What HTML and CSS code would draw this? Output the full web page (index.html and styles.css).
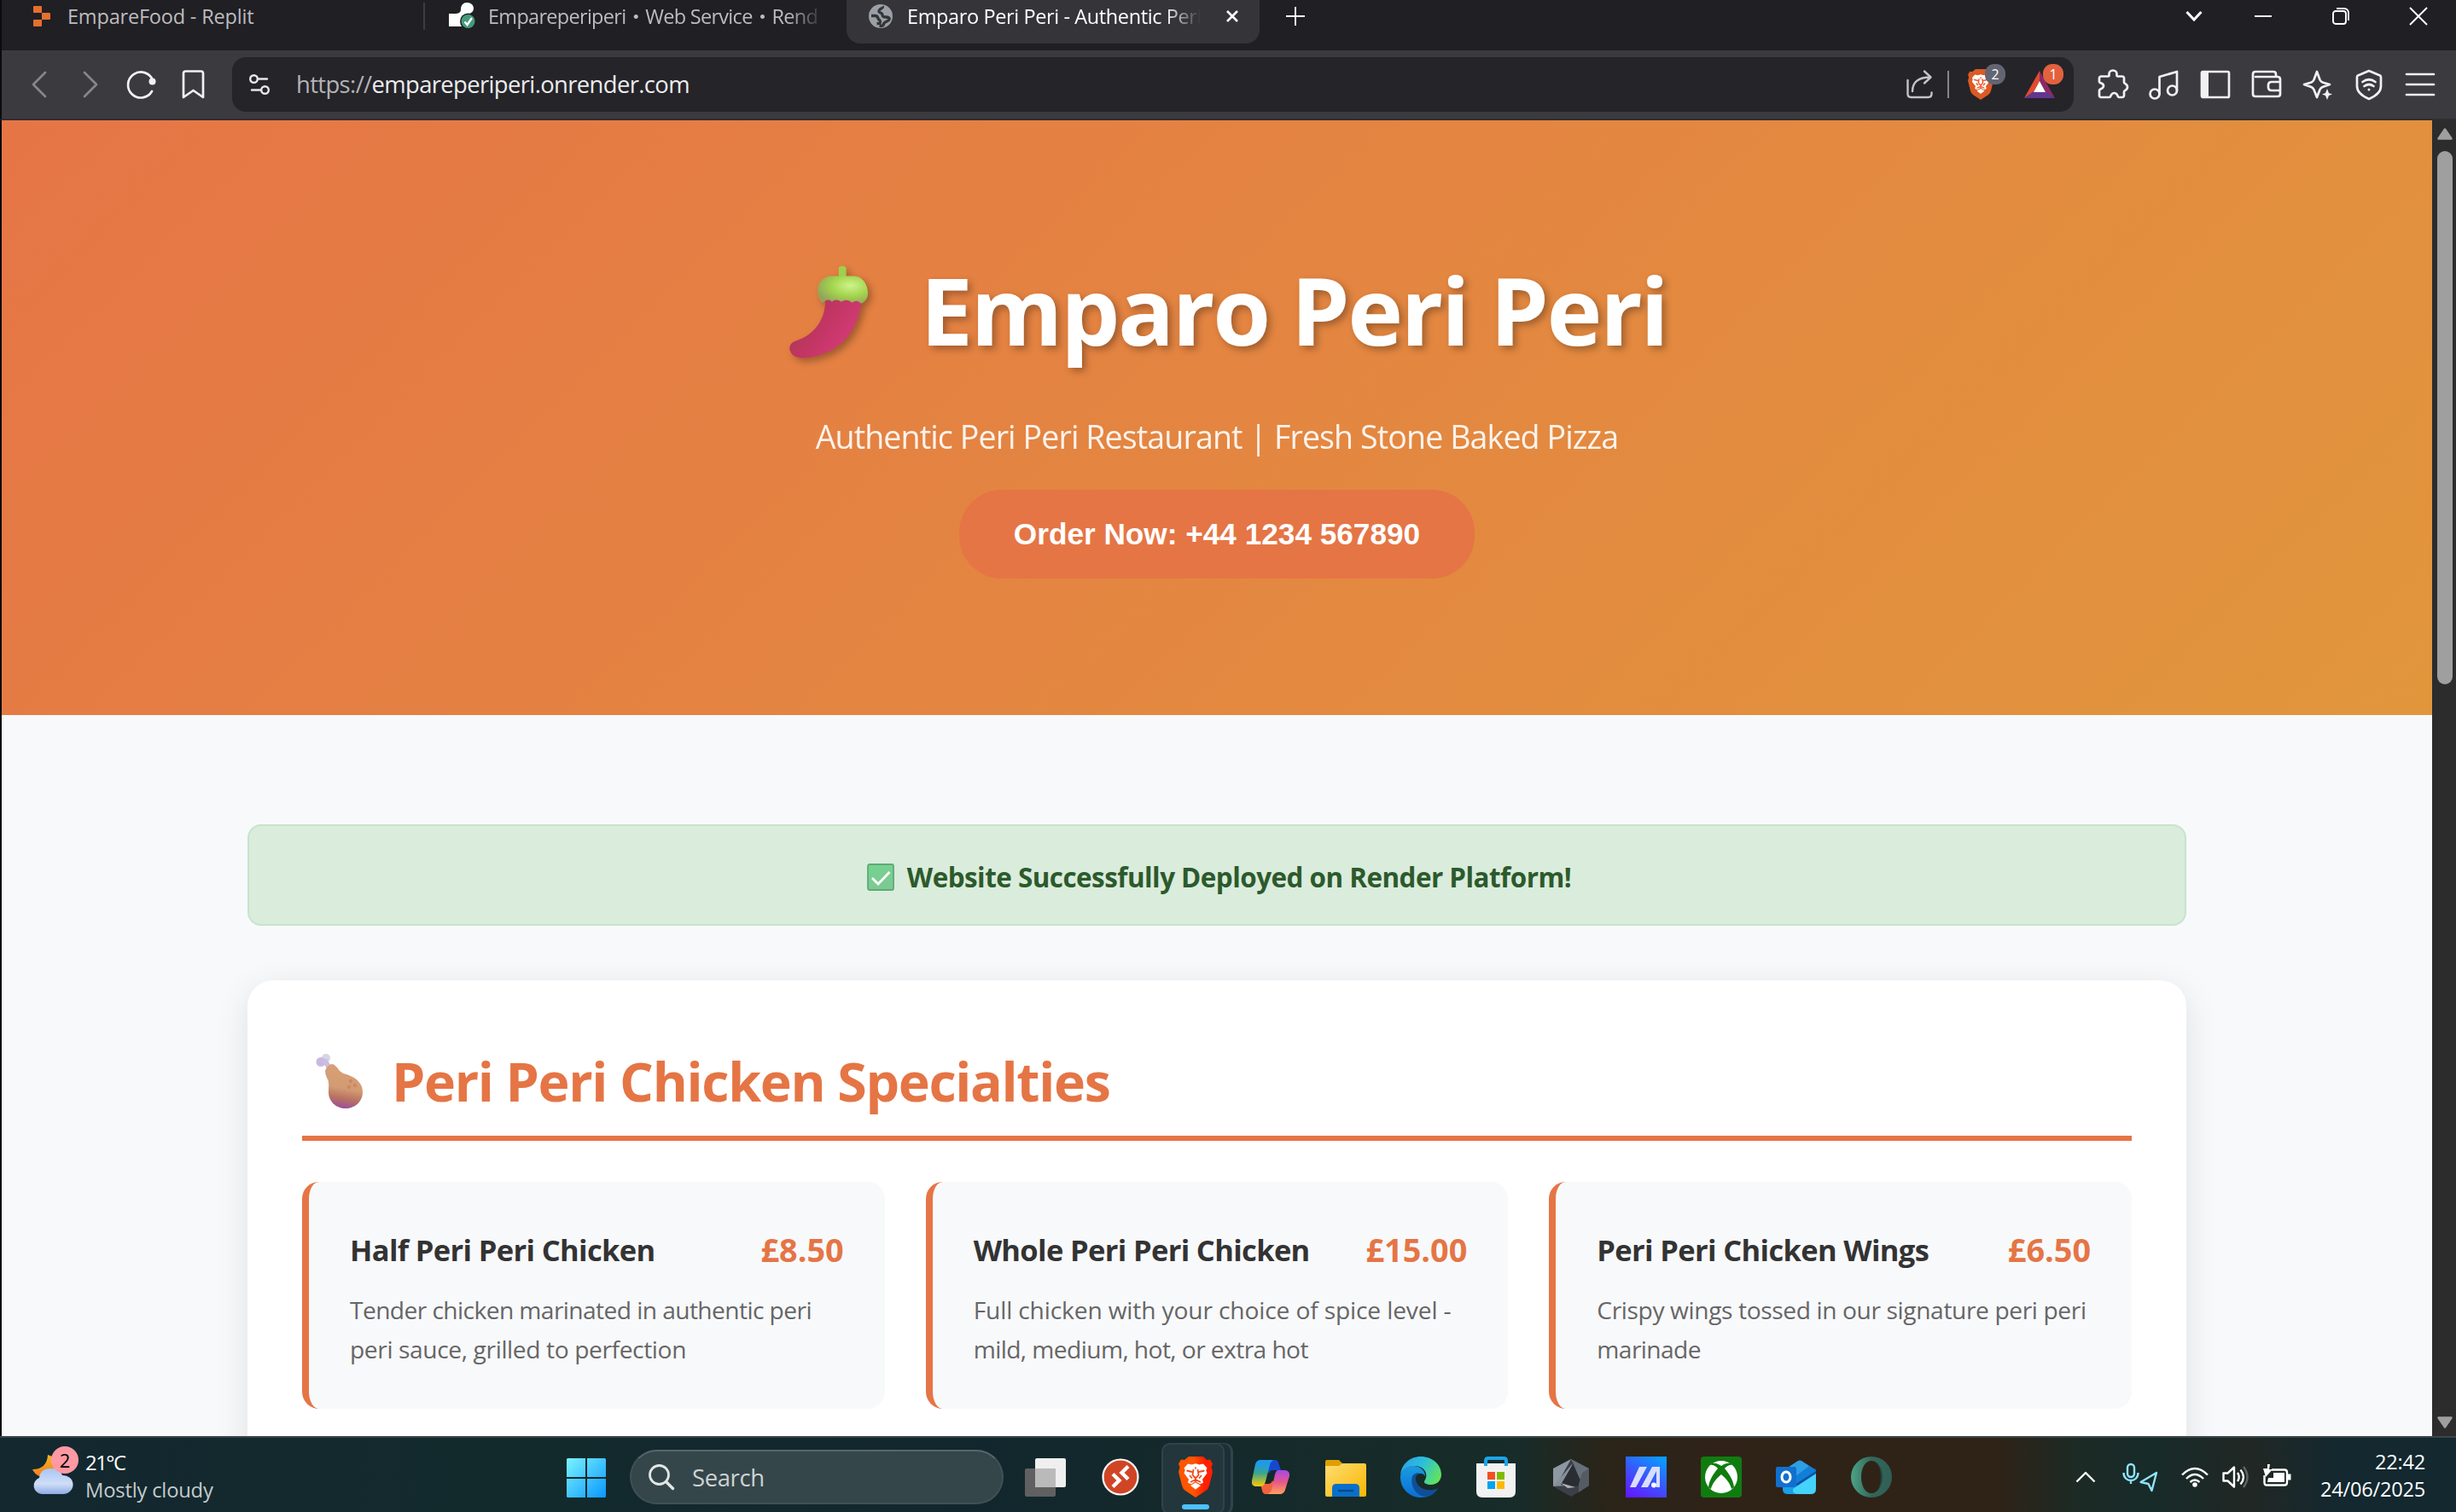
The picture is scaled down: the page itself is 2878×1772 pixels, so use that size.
FILE: index.html
```html
<!DOCTYPE html>
<html lang="en">
<head>
<meta charset="utf-8">
<title>Emparo Peri Peri - Authentic Peri Peri Restaurant</title>
<link rel="stylesheet" href="styles.css">
</head>
<body>
<svg class="defs" aria-hidden="true">
  <defs>
    <linearGradient id="lionFill" x1="0" x2="1" y1="0" y2="0"><stop offset="0.45" stop-color="#ff5500"/><stop offset="0.75" stop-color="#ff2000"/></linearGradient>
    <symbol id="lion-face" viewBox="0 0 40 48">
      <path fill="#fff" d="M11 8.500l4.500 1 4.500-1.200 4.500 1.200 4.500-1 4.500 5-1.200 2.500 1.200 3.500-5.500 7.200 1 4-4 1.500-5-3.500-5 3.500-4-1.500 1-4L6.500 19.500l1.200-3.500-1.200-2.500z"/>
      <path fill="#fff" d="M20 30.500l6 3.500-6 4.500-6-4.500z"/>
      <path class="lion-lines" d="M9.500 16.500l6.500 1.500M30.500 16.500L24 18M20 12.500v2M17.500 15l-1 6.500 2.500 3h2l2.500-3-1-6.500M13 22l3 3.500M27 22l-3 3.500M20 25v4M14 30l6-3 6 3"/>
    </symbol>
  </defs>
</svg>

<header class="tabs">
  <div class="tab tab-first">
    <svg class="fav-replit" viewBox="0 0 20 24"><path fill="#e4702e" d="M1 0h8a1 1 0 0 1 1 1v7H1a1 1 0 0 1-1-1V1a1 1 0 0 1 1-1zM10 8h9a1 1 0 0 1 1 1v6a1 1 0 0 1-1 1h-9zM0 17a1 1 0 0 1 1-1h9v7a1 1 0 0 1-1 1H1a1 1 0 0 1-1-1z"/></svg>
    <span class="tab-title replit-title">EmpareFood - Replit</span>
  </div>
  <div class="tab tab-second">
    <svg class="fav-render" viewBox="0 0 32 32"><path fill="#fff" d="M14 8c0-5 3-8 7-8 5 0 8 3 8 7 0 3-2 5-5 6-6 1-9 5-9 10v5H0V13h7c4 0 7-1 7-5z"/><circle cx="22.500" cy="22" r="9.500" fill="#202024"/><circle cx="22.500" cy="22" r="8" fill="#459b7b"/><path d="M18.500 22.500l3 3.500 5.500-8" fill="none" stroke="#fff" stroke-width="2.400"/></svg>
    <span class="tab-title fade">Empareperiperi・Web Service・Rend</span>
  </div>
  <div class="tab tab-active">
    <svg class="fav-globe" viewBox="0 0 28 28"><circle cx="14" cy="14" r="14" fill="#9aa0a6"/><path fill="none" stroke="#353439" stroke-width="3.300" stroke-linejoin="round" d="M16 2.500c2 2-5 3-4 6 .6 2 4 1 4 4 0 2 1 2.500 4 2.500s5.500 1 3.500 3.500-6 2-6 5c0 1-2 2-5 2M3 13.500h4.500c2 0 3 1 3.500 3s2.500 1.500 2.500 4-2 2-4 2"/></svg>
    <span class="tab-title fade">Emparo Peri Peri - Authentic Peri</span>
    <svg class="tab-close" viewBox="0 0 16 16"><path d="M2 2l12 12M14 2L2 14"/></svg>
  </div>
  <svg class="line-icon new-tab" viewBox="0 0 22 22"><path d="M11 0v22M0 11h22"/></svg>
  <div class="window-buttons">
    <svg class="line-icon w20 bold" viewBox="0 0 20 20"><path d="M1.500 5l8.500 9 8.500-9"/></svg>
    <svg class="line-icon w20" viewBox="0 0 20 20"><path d="M0 10h20"/></svg>
    <svg class="line-icon w20" viewBox="0 0 20 20"><rect x="1" y="4" width="15" height="15" rx="3"/><path d="M5 1h9a5 5 0 0 1 5 5v9"/></svg>
    <svg class="line-icon w20" viewBox="0 0 20 20"><path d="M0 0l20 20M20 0L0 20"/></svg>
  </div>
</header>

<nav class="toolbar">
  <div class="slots">
    <span class="slot"><svg class="tool dim" viewBox="0 0 36 36"><path d="M25 4L11 18l14 14"/></svg></span>
    <span class="slot"><svg class="tool dim" viewBox="0 0 36 36"><path d="M11 4l14 14-14 14"/></svg></span>
    <span class="slot"><svg class="tool" viewBox="0 0 36 36"><path d="M31 13A15 15 0 1 0 30 26"/><circle cx="30.500" cy="14.500" r="4" class="solid"/></svg></span>
    <span class="slot"><svg class="tool" viewBox="0 0 36 36"><path d="M7 33V5q0-2.500 2.500-2.500h18Q30 2.500 30 5v28l-11.500-8z"/></svg></span>
  </div>
  <div class="address">
    <svg class="site-icon" viewBox="0 0 24 24"><circle cx="5.500" cy="5.500" r="4.300"/><path d="M10 5.500h11M3 18.500h11"/><circle cx="18.500" cy="18.500" r="4.300"/></svg>
    <span class="url"><span class="scheme">https://</span>empareperiperi.onrender.com</span>
    <svg class="share" viewBox="0 0 32 34"><path d="M2.500 12v16q0 4 4 4h20q4 0 4-4v-1.500M8 25C8 14 15 8.500 29 8.500M22 1.500l7.500 7-7.500 7"/></svg>
    <i class="divider"></i>
    <span class="ext ext-brave">
      <svg viewBox="0 0 40 48"><path fill="#dd5a23" d="M12 0h17l4 4 4-.5 3 5-1.500 4L40 18l-4 16q-1 4-4 6L20 48 8 40q-3-2-4-6L0 18l1.500-5.500-1.500-4 3-5 4 .5z"/><use href="#lion-face"/></svg>
      <b class="badge">2</b>
    </span>
    <span class="ext ext-bat">
      <svg viewBox="0 0 36 32"><path fill="#e5492f" d="M18 0v12L11 25 0 32z"/><path fill="#8b2a66" d="M18 0v12l7 13 11 7z"/><path fill="#61368f" d="M0 32l11-8h14l11 8z"/><path fill="#fff" d="M18 12l7 13H11z"/></svg>
      <b class="badge badge-red">1</b>
    </span>
  </div>
  <div class="slots slots-right">
    <span class="slot"><svg class="tool" viewBox="0 0 36 36"><path d="M4 8.500h8c2 0 1.500-1.500 1.500-3a4.500 4 0 0 1 9 0c0 1.500-.5 3 1.500 3h5c1 0 2 1 2 2v5c0 2 4 1.500 4 5.500s-4 3.500-4 5.500v4.500c0 1-1 2-2 2h-4c-2 0-1-5-5.500-5S16 33 14 33H4c-1 0-2-1-2-2v-6c0-2 5-1.500 5-5.500S2 17 2 15v-4.500c0-1 1-2 2-2z"/></svg></span>
    <span class="slot"><svg class="tool" viewBox="0 0 36 36"><circle cx="7" cy="29" r="5.500"/><circle cx="27.500" cy="25" r="5.500"/><path d="M12.500 29V9L33 3v22"/></svg></span>
    <span class="slot"><svg class="tool" viewBox="0 0 36 36"><rect x="2" y="3" width="32" height="30" rx="1.500"/><path class="solid" d="M2 3h8v30H2z"/></svg></span>
    <span class="slot"><svg class="tool" viewBox="0 0 36 36"><path d="M29 9V6q0-3-3-3H5Q2 3 2 6v23q0 3 3 3h26q3 0 3-3V12q0-3-3-3H5M34 15H24q-4 0-4 4v2q0 4 4 4h10"/></svg></span>
    <span class="slot"><svg class="tool" viewBox="0 0 36 36"><path d="M17 3l3.500 9.500q1 2 3 3L32 18l-8.500 3q-2 1-3 3L17 33l-3.500-9q-1-2-3-3L2 18l8.500-2.500q2-1 3-3z"/><path class="solid" d="M29 23l2 5 4 1.500-4 1.500-2 5-2-5-4-1.500 4-1.500z"/></svg></span>
    <span class="slot"><svg class="tool" viewBox="0 0 36 36"><path d="M18 2l13 5.500q1 .5 1 2V20q0 9-14 15Q4 29 4 20V9.500q0-1.500 1-2z"/><path d="M10.500 15q7.500-5.500 15 0M12.500 20q5.500-4 11 0"/><circle class="solid" cx="18" cy="24" r="1.500"/></svg></span>
    <span class="slot"><svg class="tool" viewBox="0 0 36 36"><path d="M2 6h32M2 18h32M2 30h32"/></svg></span>
  </div>
</nav>

<div class="viewport">
  <div class="page">
    <section class="hero">
      <h1>
        <svg class="chilli" viewBox="0 0 96 112">
          <defs>
            <linearGradient id="pod" x1="0.200" y1="0" x2="0.900" y2="0.400"><stop offset="0" stop-color="#a83a50"/><stop offset="0.550" stop-color="#c23563"/><stop offset="1" stop-color="#cf3a72"/></linearGradient>
            <radialGradient id="cap" cx="0.650" cy="0.350" r="0.700"><stop offset="0" stop-color="#cdf48a"/><stop offset="0.550" stop-color="#a3d44d"/><stop offset="1" stop-color="#93a45a"/></radialGradient>
          </defs>
          <path fill="url(#pod)" d="M43 38c1 24-11 44-36 52-6 2-8 8-6 12 2 5 7 8 15 8 43-2 66-30 71-70z"/>
          <path fill="#9fcf4c" d="M59 3q0-3 4-3 5 0 5 3v12h-9z"/>
          <path fill="url(#cap)" d="M34 29c0-11 8-17 18-17h25c10 0 17 9 17 21 0 5-3 10-8 12-4-4-7-4-11-1-4-4-9-4-13-1-4-3-8-3-11 0-4-4-8-2-11 1-4-2-6-8-6-15z"/>
        </svg>
        <span>Emparo Peri Peri</span>
      </h1>
      <p class="tagline">Authentic Peri Peri Restaurant | Fresh Stone Baked Pizza</p>
      <a class="order">Order Now: +44 1234 567890</a>
    </section>

    <main>
      <div class="notice">
        <svg class="check" viewBox="0 0 32 32"><defs><linearGradient id="tick" x1="0" y1="0" x2="0.300" y2="1"><stop offset="0" stop-color="#74d48d"/><stop offset="1" stop-color="#7dc993"/></linearGradient></defs><rect x="1" y="1" width="30" height="30" rx="2" fill="url(#tick)" stroke="#5eaa77" stroke-width="1.800"/><path d="M6 17l7 7L26.500 10" fill="none" stroke="#fff" stroke-width="2.800"/></svg>
        <span>Website Successfully Deployed on Render Platform!</span>
      </div>

      <section class="menu">
        <h2>
          <svg class="drumstick" viewBox="0 0 56 64">
            <defs><linearGradient id="meat" x1="0.600" y1="0" x2="0.450" y2="1"><stop offset="0" stop-color="#d9a077"/><stop offset="0.550" stop-color="#d29b72"/><stop offset="0.780" stop-color="#b87162"/><stop offset="1" stop-color="#9a4d9d"/></linearGradient></defs>
            <circle cx="12" cy="5" r="5" fill="#d8d4e4"/><circle cx="6" cy="9.500" r="5.500" fill="#c8b8e2"/><path d="M10 7l7 11" stroke="#cbbde0" stroke-width="6"/>
            <path fill="url(#meat)" d="M11 20q3-8 9-8 4 2 8 8 3 3 8 4c12 4 19 11 19 21 0 11-9 19-20 19S15 56 15 45c0-8 1-12-2-17q-2-4-2-8z"/>
            <g fill="#cf8663"><circle cx="41" cy="32" r="2.200"/><circle cx="46" cy="37" r="2.200"/><circle cx="39" cy="39" r="2.200"/></g>
          </svg>
          <span>Peri Peri Chicken Specialties</span>
        </h2>
        <div class="grid">
          <article class="item">
            <div class="item-head"><h3>Half Peri Peri Chicken</h3><strong>£8.50</strong></div>
            <p><span class="tight">Tender chicken marinated in authentic peri</span><br>peri sauce, grilled to perfection</p>
          </article>
          <article class="item">
            <div class="item-head"><h3>Whole Peri Peri Chicken</h3><strong>£15.00</strong></div>
            <p><span class="loose">Full chicken with your choice of spice level -</span><br><span class="tight">mild, medium, hot, or extra hot</span></p>
          </article>
          <article class="item">
            <div class="item-head"><h3>Peri Peri Chicken Wings</h3><strong>£6.50</strong></div>
            <p>Crispy wings tossed in our signature peri peri<br><span class="tight">marinade</span></p>
          </article>
        </div>
      </section>
    </main>
  </div>
  <div class="scrollbar">
    <svg viewBox="0 0 18 14"><path d="M9 1.500L16.500 12.500h-15z"/></svg>
    <i class="thumb"></i>
    <svg viewBox="0 0 18 14"><path d="M9 12.500L1.500 1.500h15z"/></svg>
  </div>
</div>

<footer class="taskbar">
  <div class="weather">
    <div class="weather-icon">
      <svg viewBox="0 0 48 46"><defs><linearGradient id="cloud" x1="0" y1="0" x2="0" y2="1"><stop offset="0" stop-color="#a9c6f5"/><stop offset="0.600" stop-color="#cfdef6"/><stop offset="1" stop-color="#8fabe6"/></linearGradient><linearGradient id="moon" x1="0" y1="0" x2="0" y2="1"><stop offset="0" stop-color="#f3b427"/><stop offset="1" stop-color="#f08020"/></linearGradient></defs><path fill="url(#moon)" d="M18 0q9 2 12 10v15H8Q2 22 0 17q17 0 18-17z"/><path fill="url(#cloud)" d="M11 46a11 10 0 0 1-3-19q1-11 14-11 10 0 13 8a11.500 11 0 0 1 2 22z"/></svg>
      <b>2</b>
    </div>
    <div class="weather-text"><span>21°C</span><span class="muted">Mostly cloudy</span></div>
  </div>
  <div class="dock">
    <svg class="start" viewBox="0 0 46 46"><defs><linearGradient id="win" x1="0" y1="0" x2="1" y2="1"><stop offset="0" stop-color="#7af3ff"/><stop offset="1" stop-color="#0a97ff"/></linearGradient></defs><path fill="url(#win)" d="M1.500 0H22v22H0V1.500Q0 0 1.500 0zM24 0h20.500Q46 0 46 1.500V22H24zM0 24h22v22H1.500Q0 46 0 44.500zM24 24h22v20.500q0 1.500-1.500 1.500H24z"/></svg>
    <div class="search">
      <svg viewBox="0 0 30 30"><circle cx="12.500" cy="12.500" r="11" fill="none" stroke="#e2e6e6" stroke-width="2.800"/><path d="M20.500 20.500l8 8" stroke="#e2e6e6" stroke-width="3.400" stroke-linecap="round"/></svg>
      <span>Search</span>
    </div>
    <div class="apps">
      <span class="app"><svg viewBox="0 0 48 48"><rect x="0" y="15" width="36" height="33" rx="2" transform="translate(0 -1)" fill="#606060"/><rect x="12" y="2" width="36" height="34" rx="2" fill="#efefef"/><path d="M12 14h24v22H12z" fill="#bababa"/></svg></span>
      <span class="app"><svg viewBox="0 0 48 48"><circle cx="24" cy="24" r="20.500" fill="#d04526" stroke="#fff" stroke-width="2.200"/><path d="M15 20.500l7.500 7.500-7.500 7.500M33 11.500L25.500 19l7.500 7.500" fill="none" stroke="#fff" stroke-width="4.400"/></svg></span>
      <span class="app active"><svg viewBox="0 0 40 48"><path fill="url(#lionFill)" d="M12 0h17l4 4 4-.5 3 5-1.500 4L40 18l-4 16q-1 4-4 6L20 48 8 40q-3-2-4-6L0 18l1.500-5.500-1.500-4 3-5 4 .5z"/><use href="#lion-face"/></svg></span>
      <span class="app"><svg viewBox="0 0 48 48"><defs><linearGradient id="cop1" x1="0" y1="0" x2="0" y2="1"><stop offset="0.150" stop-color="#1d9bea"/><stop offset="0.500" stop-color="#3ba58d"/><stop offset="0.950" stop-color="#e8c711"/></linearGradient><linearGradient id="cop2" x1="0" y1="0" x2="0" y2="1"><stop offset="0" stop-color="#a24be8"/><stop offset="0.500" stop-color="#e8578a"/><stop offset="1" stop-color="#ffa15c"/></linearGradient></defs><path fill="#1747cf" d="M12 4h17q3 0 4 3l3 9h-9q-4 0-5 4z"/><path fill="#f0633c" d="M36 44H18q-3 0-4-4l-2-8h9q4 0 5-4z"/><path fill="url(#cop1)" d="M11 4h16q-3 2-4 6l-5 19q-1 5-5 6H6q-5-1-4-7L6 9q1-4 5-5z"/><path fill="url(#cop2)" d="M32 16h9q6 1 5 7l-5 16q-1 4-5 5H20q4-1 5-5l4-18q1-4 3-5z"/></svg></span>
      <span class="app"><svg viewBox="0 0 48 48"><path fill="#df9f02" d="M0 6q0-2 2-2h14l5 5h10v10H0z"/><defs><linearGradient id="fold" x1="0" y1="0" x2="1" y2="1"><stop offset="0" stop-color="#ffdd73"/><stop offset="1" stop-color="#f8b700"/></linearGradient></defs><path fill="url(#fold)" d="M0 12h16l4-3h26q2 0 2 2v35q0 2-2 2H2q-2 0-2-2z" transform="translate(0 -1)"/><path fill="#0a6fca" d="M8 48V38q0-5 5-5h22q5 0 5 5v10z" transform="translate(0 -1)"/><path d="M15 40h18" stroke="#064a8e" stroke-width="2.400"/></svg></span>
      <span class="app"><svg viewBox="0 0 48 48"><defs><linearGradient id="edge" x1="0" y1="0.200" x2="1" y2="0.600"><stop offset="0" stop-color="#2f9fe8"/><stop offset="0.500" stop-color="#2cc0da"/><stop offset="1" stop-color="#62e35b"/></linearGradient><linearGradient id="edgeb" x1="0" y1="0" x2="0" y2="1"><stop offset="0" stop-color="#1a9be0"/><stop offset="1" stop-color="#0b6fd6"/></linearGradient></defs><path fill="url(#edge)" d="M0 22C1 9 11 0 24 0s24 9 24 21c0 7-5 12-12 12-5 0-9-2-8-4 6-8 0-18-11-18C8 11 1 16 0 22z"/><path fill="url(#edgeb)" d="M0 24c0-8 7-13 15-13 9 0 14 6 14 12-4-6-12-3-12 4 0 10 10 18 20 17-4 3-8 4-13 4C11 48 0 38 0 24z"/><path fill="#104f96" d="M14 23c-3 11 4 24 17 24 6-1 11-5 13-10-9 5-24 2-26-10q-1-5 4-8-5 0-8 4z"/></svg></span>
      <span class="app"><svg viewBox="0 0 48 48"><path fill="#f2f2f2" d="M1 8h46v33q0 7-7 7H8q-7 0-7-7z"/><path d="M12 11V5q0-3 3-3h18q3 0 3 3v6" fill="none" stroke="#1ca5ea" stroke-width="4"/><path fill="#f25022" d="M14 18h9v9h-9z"/><path fill="#7fba00" d="M25 18h9v9h-9z"/><path fill="#00a4ef" d="M14 29h9v9h-9z"/><path fill="#ffb900" d="M25 29h9v9h-9z"/></svg></span>
      <span class="app"><svg viewBox="0 0 48 48"><path fill="#3c4046" d="M24 3l21 11v20L24 47 3 35V14z"/><path fill="#8d98a3" d="M24 3L3 14v21l6-5z"/><path fill="#66707b" d="M24 3l21 11-8 20L27 9z"/><path fill="#85909b" d="M3 35l22-26 2 3-14 20 6 2z"/><path fill="#2a2d32" d="M26 9l11 23-7 3-18-2z"/><path fill="#aab3bb" d="M12 31l17 5-9 1z"/><path fill="#555b63" d="M37 19l8-5v20l-12 8V32z"/></svg></span>
      <span class="app"><svg viewBox="0 0 48 48"><defs><linearGradient id="ma" x1="0.800" y1="0" x2="0.200" y2="1"><stop offset="0" stop-color="#0a9bff"/><stop offset="0.500" stop-color="#3957fb"/><stop offset="1" stop-color="#601cff"/></linearGradient></defs><path fill="url(#ma)" d="M0 0h48v48H0z"/><path fill="#d9ddff" d="M16 12h9L12 36H5zM31 12h9v24h-4V17L26 36h-8z"/><circle cx="33" cy="33.500" r="3" fill="#fff"/></svg></span>
      <span class="app"><svg viewBox="0 0 48 48"><rect width="48" height="48" rx="4" fill="#107c10"/><circle cx="24" cy="24" r="19" fill="#fff"/><path fill="#107c10" d="M13 8c4-1 8 1 11 3 3-2 7-4 11-3l2 2c-4-1-7 2-9 4 5 6 10 13 11 22l-3 2c-1-6-7-13-12-17-5 4-11 11-12 17l-3-2c1-9 6-16 11-22-2-2-5-5-9-4z"/></svg></span>
      <span class="app"><svg viewBox="0 0 48 48"><path fill="#2e9fe6" d="M9 16L26 5q2-1 4 0l17 11v8H9z"/><path fill="#0b4ea6" d="M16 26L47 14v16L26 40z"/><path fill="#127fd6" d="M22 24L39 11l8 5v1L22 33z"/><path fill="#1a9fe8" d="M8 34l14-4 8 14H14q-6 0-6-6z"/><path fill="#44d3fa" d="M47 20v18q0 6-6 6H27q-7 0-7-4 0-3 4-5z"/><rect y="12" width="24" height="24" rx="2" fill="#1170cf"/><ellipse cx="12" cy="24" rx="5" ry="6" fill="none" stroke="#fff" stroke-width="3"/></svg></span>
      <span class="app"><svg viewBox="0 0 48 48"><defs><linearGradient id="op" x1="0" y1="0" x2="1" y2="0"><stop offset="0" stop-color="#4aa586"/><stop offset="0.500" stop-color="#34665a"/><stop offset="1" stop-color="#2f5f56"/></linearGradient></defs><path fill="url(#op)" fill-rule="evenodd" d="M24 0a24 24 0 1 0 0 48 24 24 0 1 0 0-48zm0 5c7 0 12 8 12 19s-5 19-12 19-12-8-12-19S17 5 24 5z"/><path fill="#27453f" d="M24 5c6 0 13 7 13 19s-7 19-13 19c7 0 11-8 11-19S31 5 24 5z"/></svg></span>
    </div>
  </div>
  <div class="tray">
    <svg class="t-chevron" viewBox="0 0 24 14"><path d="M1.500 12.500L12 2l10.500 10.500"/></svg>
    <svg class="t-mic" viewBox="0 0 42 34"><rect x="6" y="2" width="8" height="15" rx="4"/><path d="M1.500 12c0 12 17 12 17 0M10 21v4M40 12L21.500 23l9 2 4 8z"/></svg>
    <svg class="t-wifi" viewBox="0 0 32 24"><path d="M1 9.500q15-15 30 0M6 14q10-10 20 0M10.500 18q5.500-5 11 0"/><circle class="fill" cx="16" cy="21" r="2.800"/></svg>
    <svg class="t-sound" viewBox="0 0 32 28"><path d="M1.500 9.500h5L14 2.500v23l-7.500-7h-5zM18 9q3.500 5 0 10M21.500 5.500q7 8.500 0 17"/><path class="faint" d="M25 2q9 12 0 24"/></svg>
    <svg class="t-battery" viewBox="0 0 33 28"><path d="M10 7.500h15q3 0 3 3v12q0 3-3 3H4.500q-3 0-3-3V14"/><path class="fill" d="M12 11h13v11H5l1-5h6zM29 12.500h3.500v7H29zM5 1v5H0l3 10 8-9H7l1-6z"/></svg>
    <div class="clock"><span>22:42</span><span>24/06/2025</span></div>
  </div>
</footer>
</body>
</html>
```
FILE: styles.css
```css
* { box-sizing: border-box; margin: 0; padding: 0; }

:root {
  --orange: #e57545;
  --ui: "Segoe UI", "Open Sans", "Noto Sans", "Noto Sans CJK JP", sans-serif;
}

body {
  width: 2878px;
  height: 1772px;
  overflow: hidden;
  display: flex;
  flex-direction: column;
  font-family: var(--ui);
  background: #201f24;
}

svg { display: block; flex: none; overflow: visible; }
.defs { position: absolute; width: 0; height: 0; }
.lion-lines { fill: none; stroke: #ee4a1c; stroke-width: 1.8; }

/* Tab strip */
.tabs {
  flex: none;
  height: 59px;
  display: flex;
  align-items: flex-start;
  border-left: 2px solid #0b0b0d;
  background: #201f24;
}
.tab { height: 51px; padding-bottom: 14px; display: flex; align-items: center; }
.tab-title { font-size: 23.5px; line-height: 34px; letter-spacing: -0.0165em; color: #bdbcbf; white-space: nowrap; }
.replit-title { letter-spacing: -0.008em; }
.fade { mask-image: linear-gradient(90deg, #000 calc(100% - 42px), transparent); }
.tab-first { width: 496px; padding-left: 37px; gap: 20px; }
.tab-first::after { content: ""; width: 2px; height: 32px; margin-left: auto; background: #3d3c41; }
.tab-second { width: 494px; padding-left: 28px; gap: 14px; }
.tab-second .tab-title { width: 394px; letter-spacing: -0.03em; }
.tab-active { width: 484px; padding-left: 26px; border-radius: 0 0 16px 16px; background: #353439; }
.tab-active .tab-title { width: 344px; margin-left: 17px; color: #fff; }
.fav-replit { width: 20px; height: 24px; }
.fav-render { width: 32px; height: 32px; }
.fav-globe { width: 28px; height: 28px; }
.tab-close { width: 16px; height: 16px; margin-left: 29px; fill: none; stroke: #fff; stroke-width: 2.6; }
.line-icon { fill: none; stroke: #fff; stroke-width: 1.9; }
.new-tab { width: 22px; height: 22px; margin: 8px 0 0 31px; }
.window-buttons { display: flex; gap: 71px; margin: 9px 34px 0 auto; }
.w20 { width: 20px; height: 20px; }
.bold { stroke-width: 3; margin-right: -10px; }

/* Toolbar */
.toolbar {
  flex: none;
  height: 82px;
  padding-bottom: 2px;
  display: flex;
  align-items: center;
  border-left: 2px solid #0b0b0d;
  border-bottom: 2px solid #2f2e33;
  background: #3b3a3f;
}
.slots { display: flex; padding-left: 14px; width: 270px; }
.slots-right { padding-left: 16px; width: 446px; }
.slot { flex: none; width: 60px; display: flex; justify-content: center; padding-top: 2px; }
.tool { width: 36px; height: 36px; fill: none; stroke: #f1f1f4; stroke-width: 2.7; stroke-linecap: round; stroke-linejoin: round; }
.tool .solid { fill: #f1f1f4; stroke: none; }
.dim { stroke: #87868b; }
.address { width: 2158px; height: 64px; margin-top: 1px; padding: 0 12px 0 20px; display: flex; align-items: center; border-radius: 16px; background: #252429; }
.site-icon { width: 24px; height: 24px; fill: none; stroke: #e6e6e8; stroke-width: 2.4; stroke-linecap: round; }
.url { margin-left: 31px; font-size: 27.4px; letter-spacing: -0.0225em; color: #ececee; }
.scheme { color: #b4b3b8; }
.share { width: 32px; height: 34px; margin-left: auto; fill: none; stroke: #c4c3c8; stroke-width: 2.4; stroke-linecap: round; stroke-linejoin: round; }
.divider { width: 2px; height: 32px; margin: 0 22px 0 17px; background: #87868b; }
.ext { position: relative; }
.ext-brave { width: 44px; margin-right: 22px; }
.ext-brave svg { width: 30px; height: 36px; }
.ext-bat { width: 46px; }
.ext-bat svg { width: 36px; height: 32px; }
.badge {
  position: absolute;
  right: 0;
  top: -6px;
  width: 24px;
  height: 24px;
  border-radius: 11px;
  background: #636573;
  color: #fff;
  font-size: 16px;
  font-weight: 400;
  line-height: 25px;
  text-align: center;
}
.badge-red { top: -8px; background: #e2613e; }

/* Page and scrollbar */
.viewport { flex: none; height: 1542px; display: flex; border-left: 2px solid #0b0b0d; background: #f8f9fb; }
.page { width: 2848px; height: 1542px; overflow: hidden; }
.scrollbar { width: 28px; padding: 9px 5px 9px 6px; display: flex; flex-direction: column; background: #2c2c2c; }
.scrollbar svg { width: 18px; height: 14px; fill: #9f9f9f; stroke: #9f9f9f; stroke-width: 2.5; stroke-linejoin: round; }
.thumb { width: 18px; height: 625px; margin: 13px 0 auto; border-radius: 9px; background: #9f9f9f; }

.hero {
  height: 697px;
  padding-top: 128px;
  display: flex;
  flex-direction: column;
  align-items: center;
  color: #fff;
  background: linear-gradient(135deg, #e67546, #e1963c);
}
h1 { display: flex; align-items: center; padding-left: 26px; height: 179px; font-size: 109.8px; line-height: 179px; font-weight: 700; letter-spacing: -0.0225em; text-shadow: 4px 4px 8px rgba(0, 0, 0, 0.3); white-space: nowrap; }
h1 span { padding-top: 7px; }
.chilli { width: 94px; height: 111px; margin: 15px 60px 0 0; filter: drop-shadow(4px 4px 4px rgba(0, 0, 0, 0.3)); }
.tagline { margin-top: 32px; padding-top: 2px; font-size: 37.6px; line-height: 60px; letter-spacing: -0.024em; opacity: 0.9; white-space: nowrap; }
.order { margin-top: 32px; height: 104px; padding: 0 64px; border-radius: 50px; background: var(--orange); font: 700 35.2px/104px "Liberation Sans", Arial, sans-serif; white-space: nowrap; }

main { padding: 128px 288px 0; }
.notice { height: 119px; padding-left: 5px; display: flex; align-items: center; justify-content: center; gap: 15px; border: 2px solid #c6e4cc; border-radius: 16px; background: #daecdc; color: #2c5a2c; font-size: 31.4px; font-weight: 700; letter-spacing: -0.0165em; white-space: nowrap; }
.notice span { padding-top: 3px; }
.check { width: 32px; height: 32px; margin-top: 4px; }

.menu { margin-top: 64px; height: 640px; padding: 64px; border-radius: 30px; background: #fff; box-shadow: 0 10px 40px rgba(0, 0, 0, 0.1); }
h2 { height: 124px; padding-bottom: 15px; display: flex; align-items: center; border-bottom: 6px solid var(--orange); color: var(--orange); font-size: 62.7px; line-height: 102px; font-weight: 700; letter-spacing: -0.0215em; white-space: nowrap; }
h2 span { padding-top: 5px; }
.drumstick { width: 56px; height: 64px; margin: 5px 33px 0 16px; }
.grid { margin-top: 48px; display: grid; grid-template-columns: repeat(3, 1fr); gap: 48px; }
.item { height: 266px; padding: 48px; border-left: 8px solid var(--orange); border-radius: 20px; background: #f8f9fb; }
.item-head { height: 61px; padding-top: 2px; display: flex; align-items: center; justify-content: space-between; white-space: nowrap; }
h3 { font-size: 34.5px; font-weight: 700; letter-spacing: -0.019em; color: #333; }
.item-head strong { font-size: 37.8px; font-weight: 700; color: var(--orange); }
.item p { margin-top: 18px; font-size: 28.2px; line-height: 46.08px; letter-spacing: -0.014em; color: #666; white-space: nowrap; }
.item .tight { letter-spacing: -0.021em; }
.item .loose { letter-spacing: -0.0055em; }

/* Taskbar */
.taskbar {
  flex: none;
  height: 89px;
  display: grid;
  grid-template-columns: 664px 1fr 446px;
  align-items: center;
  border-top: 2px solid #3c4749;
  background: linear-gradient(90deg, #13282f, #132a2d 600px, #12272d 1150px, #162b29 1620px, #182c29 1780px, #2a2419 1880px, #2f2318 2000px, #2f2318 2340px, #1d2a25 2430px, #172b29 2520px, #212724 2640px, #13282f 2740px);
  color: #fff;
}
.weather { display: flex; align-items: flex-start; align-self: start; padding: 9px 0 0 38px; }
.weather-icon { position: relative; width: 62px; padding-top: 11px; }
.weather-icon svg { width: 48px; height: 46px; }
.weather-icon b { position: absolute; left: 22px; top: 1px; width: 32px; height: 32px; border-radius: 50%; background: #ff99a4; color: #000; font-size: 22px; font-weight: 400; line-height: 33px; text-align: center; }
.weather-text { display: flex; flex-direction: column; padding-top: 4px; font-size: 23.8px; line-height: 32px; letter-spacing: -0.009em; white-space: nowrap; }
.weather-text span:first-child { letter-spacing: -0.06em; }
.muted { color: #c5cbcd; }
.dock { display: flex; align-items: center; height: 87px; }
.start { width: 46px; height: 46px; margin-top: 7px; }
.search { width: 438px; height: 64px; margin: 5px 5px 0 28px; padding-left: 20px; display: flex; align-items: center; gap: 21px; border: 2px solid #3f5155; border-top-color: #56676b; border-radius: 32px; background: #35464a; font-size: 27.5px; letter-spacing: -0.015em; color: #cdd3d4; }
.search svg { width: 30px; height: 30px; }
.apps { display: flex; }
.app { width: 88px; height: 87px; padding-top: 5px; display: flex; align-items: center; justify-content: center; }
.app svg { width: 48px; height: 48px; position: relative; }
.active { position: relative; }
.active svg { width: 40px; }
.active::before { content: ""; position: absolute; left: 4px; top: 6px; width: 70px; height: 80px; border: 2px solid #30434a; border-radius: 10px; background: #22363c; box-shadow: 8px 0 0 -1px #1b3036, 10px 0 0 0 #30434a; }
.active::after { content: ""; position: absolute; left: 28px; bottom: 3px; width: 32px; height: 6px; border-radius: 3px; background: #4cc2ff; }
.tray { display: flex; align-items: center; height: 87px; padding-top: 4px; }
.tray svg { fill: none; stroke: #fff; stroke-width: 2.4; stroke-linejoin: round; }
.tray .fill { fill: #fff; stroke: none; }
.tray .faint { stroke: #5d6663; }
.t-chevron { width: 24px; height: 14px; }
.tray .t-mic { width: 42px; height: 34px; margin-left: 31px; stroke: #8fe3ff; }
.t-wifi { width: 32px; height: 24px; margin-left: 27px; }
.t-sound { width: 32px; height: 28px; margin-left: 16px; }
.t-battery { width: 33px; height: 28px; margin: -3px 0 0 16px; }
.clock { margin: -3px 36px 0 auto; display: flex; flex-direction: column; text-align: right; font-size: 23.6px; line-height: 32px; letter-spacing: -0.009em; }
```
